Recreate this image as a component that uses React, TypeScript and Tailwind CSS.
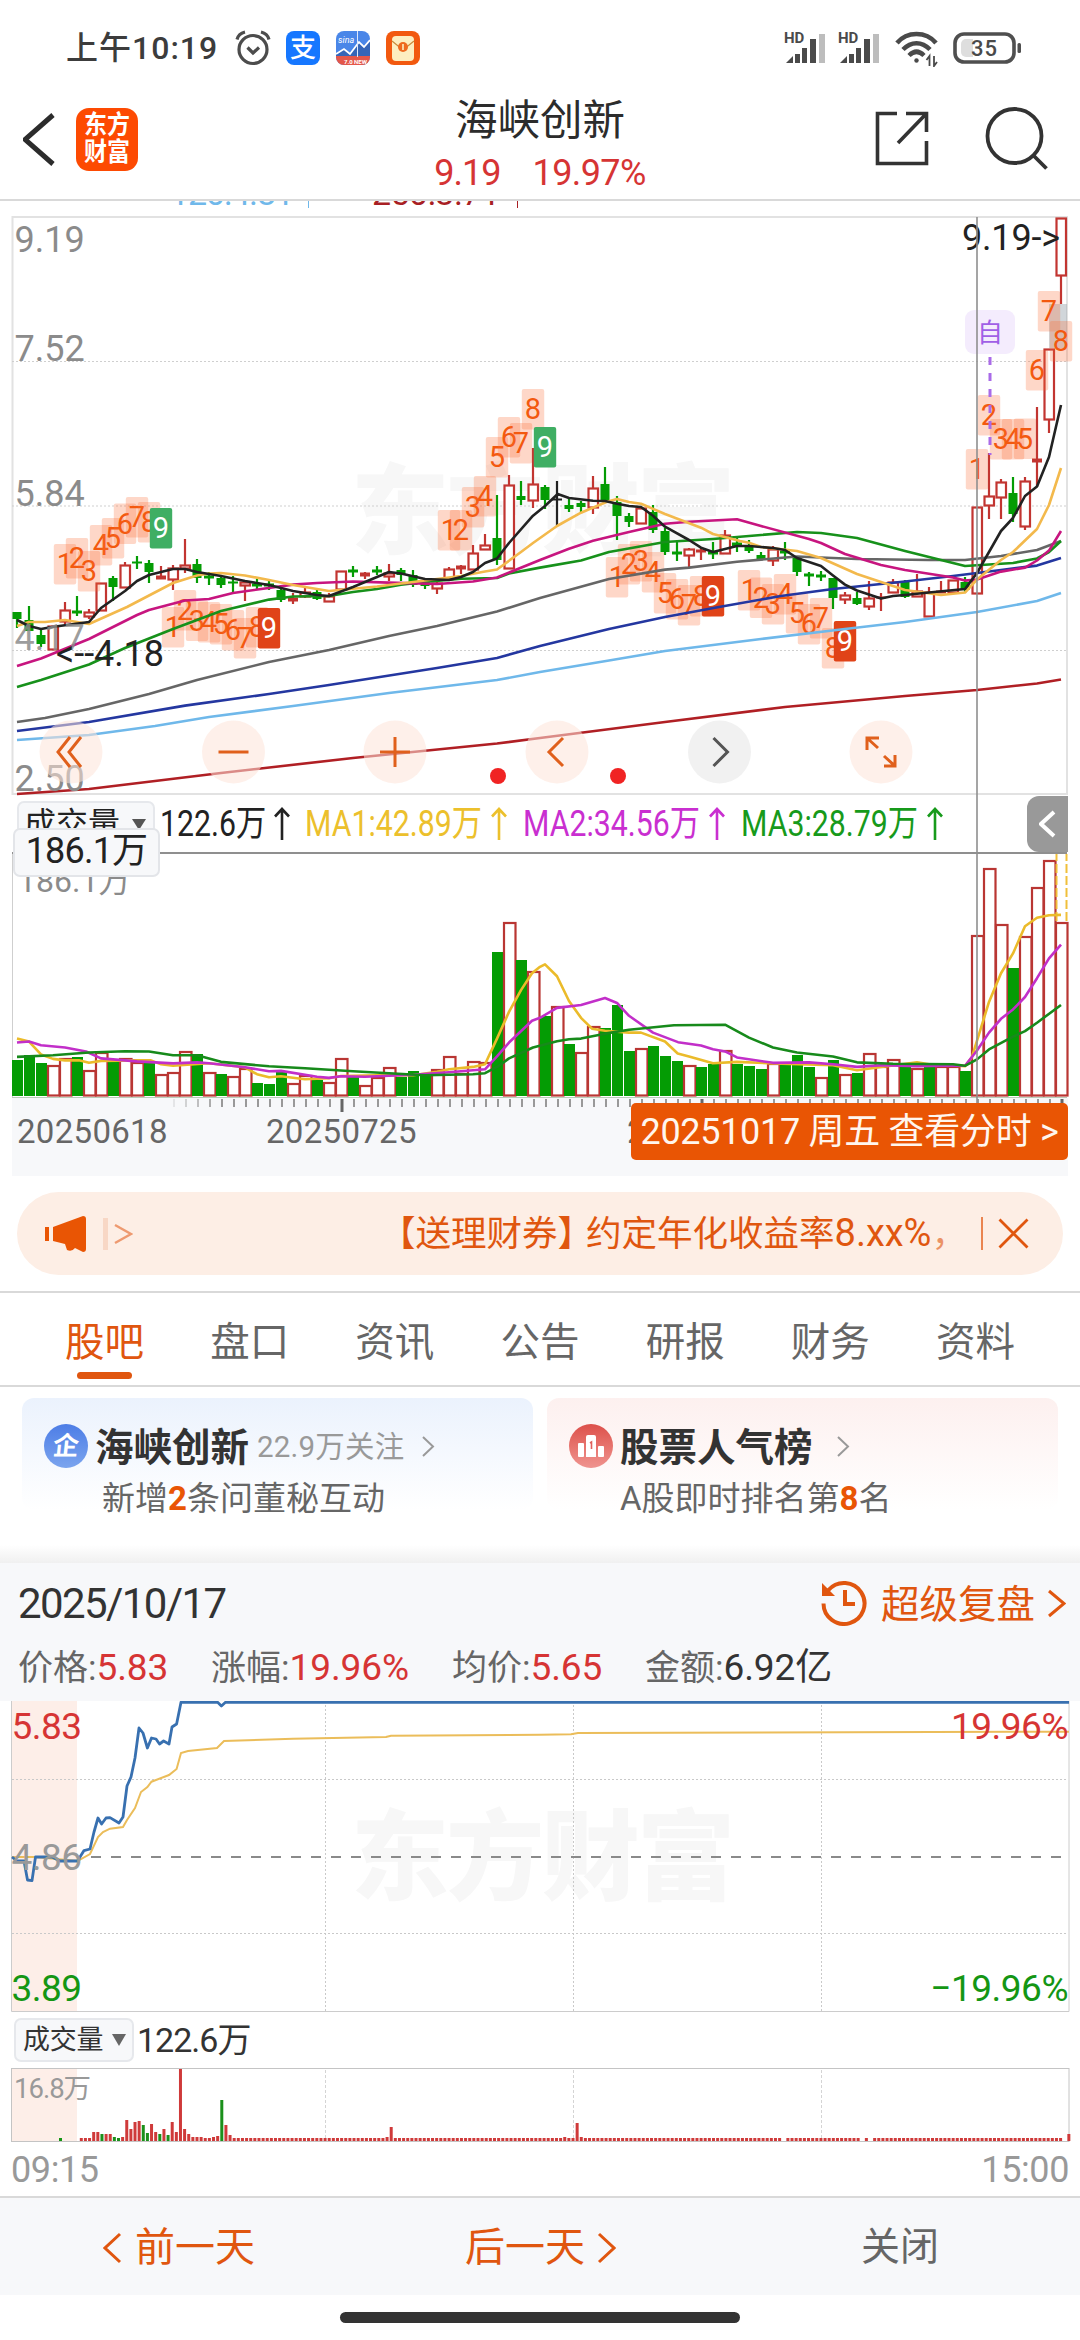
import type { ReactNode } from "react";

type Candle = [kind: "r" | "g" | "k", high: number, top: number, bottom: number, low: number];

const STEP = 12;
const cx = (i: number) => 17 + i * STEP;

const candles: Candle[] = [
  ["g", 612, 612, 619, 628], ["g", 606, 620, 631, 631], ["g", 630, 635, 644, 647], ["r", 626, 626, 650, 650],
  ["r", 602, 610, 622, 625], ["g", 596, 611, 613, 616], ["r", 609, 612, 617, 619], ["r", 583, 583, 611, 611],
  ["g", 576, 578, 587, 601], ["r", 562, 565, 588, 588], ["g", 556, 562, 563, 569], ["g", 560, 563, 572, 583],
  ["r", 566, 576, 579, 579], ["r", 565, 568, 580, 590], ["r", 539, 565, 569, 573], ["g", 559, 564, 578, 583],
  ["g", 572, 576, 578, 585], ["g", 576, 578, 585, 588], ["g", 576, 582, 583, 593], ["r", 580, 582, 586, 601],
  ["g", 579, 584, 586, 590], ["g", 581, 584, 586, 590], ["g", 587, 590, 600, 602], ["r", 593, 598, 601, 604],
  ["r", 587, 592, 597, 598], ["g", 590, 592, 599, 600], ["r", 593, 596, 602, 602], ["r", 571, 571, 590, 590],
  ["g", 566, 570, 572, 577], ["r", 572, 573, 576, 579], ["g", 566, 570, 572, 575], ["r", 564, 573, 577, 581],
  ["g", 568, 570, 575, 581], ["g", 570, 575, 585, 587], ["g", 579, 582, 586, 589], ["r", 582, 583, 589, 594],
  ["r", 567, 569, 579, 579], ["r", 565, 566, 569, 574], ["r", 545, 553, 570, 570], ["r", 534, 545, 550, 550],
  ["g", 495, 538, 560, 565], ["r", 475, 485, 569, 569], ["g", 481, 496, 500, 505], ["r", 448, 484, 501, 508],
  ["g", 485, 487, 500, 509], ["k", 481, 499, 500, 526], ["g", 499, 505, 509, 512], ["g", 501, 503, 507, 513],
  ["r", 476, 488, 508, 514], ["g", 467, 484, 501, 501], ["g", 496, 502, 516, 540], ["g", 513, 516, 522, 527],
  ["r", 508, 508, 524, 524], ["g", 505, 512, 530, 533], ["g", 528, 531, 552, 555], ["g", 541, 552, 554, 561],
  ["r", 548, 549, 556, 567], ["r", 548, 550, 552, 560], ["g", 542, 552, 554, 559], ["r", 530, 535, 554, 554],
  ["g", 536, 543, 546, 552], ["g", 540, 545, 551, 553], ["g", 552, 555, 560, 560], ["r", 546, 549, 561, 566],
  ["g", 542, 551, 553, 560], ["g", 556, 558, 572, 576], ["g", 572, 574, 576, 586], ["g", 571, 575, 577, 581],
  ["g", 578, 578, 598, 609], ["r", 592, 595, 600, 604], ["g", 592, 598, 604, 605], ["r", 581, 598, 607, 610],
  ["r", 593, 597, 598, 611], ["r", 579, 582, 593, 593], ["g", 580, 582, 597, 598], ["r", 574, 591, 597, 597],
  ["r", 587, 592, 617, 617], ["r", 581, 591, 593, 593], ["r", 580, 580, 593, 593], ["g", 577, 582, 590, 593],
  ["r", 507, 507, 594, 594], ["r", 453, 496, 506, 519], ["r", 479, 482, 498, 519], ["g", 477, 493, 514, 522],
  ["r", 477, 481, 527, 530], ["r", 407, 459, 462, 487], ["r", 349, 349, 420, 433], ["r", 218, 218, 276, 304],
];

const volumes = [
  36, 41, 33, 31, 38, 39, 26, 44, 35, 38, 34, 33, 22, 24, 45, 42, 24, 22, 20, 28, 13, 12, 25, 13, 21, 16, 14, 38, 19,
  11, 19, 29, 19, 25, 20, 27, 40, 23, 35, 34, 144, 174, 136, 125, 80, 90, 52, 44, 70, 68, 91, 45, 48, 50, 40, 35, 31,
  29, 32, 46, 32, 30, 27, 33, 31, 41, 29, 19, 36, 22, 23, 43, 30, 37, 30, 28, 29, 30, 30, 25, 161, 228, 172, 128, 160,
  209, 236, 174,
];
const volumeGreen = new Set([
  0, 1, 2, 5, 8, 11, 15, 17, 20, 21, 22, 25, 28, 32, 33, 34, 40, 42, 44, 46, 49, 50, 51, 53, 54, 55, 57, 58, 60, 61, 62,
  64, 65, 66, 68, 70, 74, 76, 79, 83,
]);

const priceLines = [
  { color: "#b01f24", points: "17,794 89,789 221,773 353,758 497,743.5 540,738 665,722 785,707 905,696 977,690 1037,683.5 1061,679.5" },
  { color: "#6fb8ea", points: "17,740 89,735 155,726 209,717 293,706 389,693 497,680 540,672 609,660.5 665,651 761,639 845,629 905,622 977,612 1037,601 1061,593" },
  { color: "#2437a0", points: "17,731 89,722 185,705.6 269,694 329,685 437,668 497,658 540,646 609,629 665,617 719,607 781,596 833,589 905,581.5 953,576 977,573 1001,570 1037,565.6 1061,558" },
  { color: "#666666", points: "17,722 45,718 89,709 149,694 197,680 269,662 329,650 389,636 437,626 497,611.5 540,598 609,579 665,569.6 689,567.6 737,561.7 797,556.5 857,559 929,560 965,560 1001,556 1037,550 1061,541" },
  { color: "#17911b", points: "17,687 41,680 89,664.5 125,648 173,629 221,611 269,599.6 293,596.5 329,596 353,592 377,589 401,584.6 425,582 461,578.7 497,578 509,573.5 540,567.6 581,560.5 609,552 665,542 713,539 761,535 797,532 821,533 857,538 905,551 953,563 965,566 1013,563 1037,558.5 1049,552 1061,541" },
  { color: "#c7157f", points: "17,666 41,658.5 89,639 137,615 149,610 185,600.5 209,599 233,593 293,584.6 317,583 353,581.5 389,582.6 437,584 473,581.5 497,577.5 540,560 569,548.7 593,540.7 629,532 665,523.7 689,521.7 737,519.3 761,526 809,539 821,543 845,554 881,565 905,570 953,577.5 965,580.6 977,579.5 1001,571.6 1025,567.6 1037,560.5 1049,550.6 1061,531" },
  { color: "#f3b94c", points: "17,626 29,622 45,622 65,620 89,624 127,607 173,583 197,575.5 209,573.5 221,573 245,575.5 269,580 293,585 329,591 377,586.5 425,580.5 461,576 485,571.5 497,569.5 521,552 533,543 557,526 581,512.7 607,501.7 617,499 629,502 641,503.7 665,514 701,527.7 713,534 740,541 749,542.7 761,547 797,551 821,558 857,574 905,590 941,595 965,592.5 977,579.5 1001,560 1013,552 1037,529 1049,505 1061,468" },
  { color: "#222222", points: "17,620 29,626 41,629 52,627 89,622 101,608 125,591 137,581 149,575 161,572 173,569 185,569 197,572 221,576 245,581 269,585 293,591 317,595 329,596 353,587 377,577 389,572 401,573.5 425,579 449,580 461,577 473,572 485,563 497,558.5 509,543 533,515.7 545,506 557.7,494 569,498 593,500.7 605,501 617,503.7 629,506 641,507 653,515.7 665,526.7 689,540 701,547.7 713,552 725,549 737,546 749,546 773,548 785,550 797,558 821,566 833,575.5 845,584.6 857,590.5 881,598.5 893,596 905,595 929,592.5 965,589 977,573 989,552 1001,531 1013,518 1025,496 1037,486.5 1049,457 1061,405" },
];

const volumeLines = [
  { color: "#ebbb2a", points: "17,1041 29,1044 41,1057 53,1061.5 65,1063 79,1063 89,1065.5 101,1063.5 137,1063 151,1063 161,1067 173,1068.5 209,1066 245,1070 257,1077 269,1080 281,1079 305,1082 329,1081 341,1078.7 377,1078 413,1078 437,1074.6 449,1072 473,1069.6 485,1067 497,1041 509,1014 521,992 532,975 540,968.5 545,966 557,978 569,1003 581,1020 592,1031 605,1033 629,1035 641,1035 665,1044 677.7,1056 689,1059 713,1066 737,1064.5 773,1066 833,1068 857,1073 881,1069.6 917,1065 929,1067 965,1069 972,1059.5 989,1004 1001,975 1013,955 1025,927.5 1037,919 1049,916.5 1061,916" },
  { color: "#c22fc9", points: "17,1045 29,1044 41,1047.7 65,1050 86,1054 101,1061 137,1064 173,1066 197,1065 209,1066 245,1070 269,1074 281,1073.6 317,1079.6 329,1080.7 341,1079 365,1079.6 413,1077.6 449,1075 485,1072 497,1059 509,1045 532,1023 540,1020 557,1010 581,1007 605,1000 617,1005 629,1018 653,1035 678,1044.6 701,1048 713,1051.7 725,1054 737,1060 773,1065.5 809,1065 833,1067 857,1069.6 881,1068 917,1069 941,1068.5 965,1068.5 977,1053 989,1035 1001,1021 1013,1011.6 1025,999 1037,980 1049,960 1061,946" },
  { color: "#178a1b", points: "17,1059.5 53,1057.8 89,1055 125,1053.7 149,1054 173,1057.8 197,1057.8 221,1064.5 269,1069 305,1071 353,1074 389,1076 425,1078 473,1077 485,1076 499,1068.5 509,1061 533,1050 557,1043.6 569,1041.6 581,1041 605,1036 629,1032 674,1027.5 725,1027 749,1040 773,1050 797,1055 833,1059 857,1065 893,1066.5 953,1067 965,1068.5 977,1062 989,1052 1013,1039 1025,1033.5 1037,1025 1061,1007" },
];

// TD sequence counts: index of the first candle, then the top of each tag
const sequences: { start: number; tops: number[]; nine?: string }[] = [
  { start: 4, tops: [544, 538, 551, 525, 518, 503.5, 497, 502, 508], nine: "#3fae63" },
  { start: 13, tops: [607, 590, 600.5, 602, 604, 610, 618, 607, 608], nine: "#e04318" },
  { start: 36, tops: [510, 510, 487, 476, 437, 417, 423, 389, 427], nine: "#3fae63" },
  { start: 50, tops: [557, 544, 541, 552, 573, 579, 585, 576, 576], nine: "#e04318" },
  { start: 61, tops: [570, 577.5, 584, 574, 593, 604, 598, 628, 621], nine: "#e04318" },
  { start: 80, tops: [449, 395, 419, 419, 418.5, 350, 291, 321] },
];

const minuteHeads = [
  3, 3, 3, 9, 9, 7, 7, 7, 4, 3, 4, 21, 12, 19, 20, 16, 8, 17, 9, 7, 12, 6, 19, 9, 72, 12, 7, 4, 4, 4, 3, 3, 4, 5, 41,
  16, 6,
];
const minuteSpikes: Record<number, number> = { 74: 4, 75: 14, 117: 4, 120: 18, 121: 4, 170: 0, 189: 0, 191: 0, 238: 0, 239: 7 };
const minuteGreen = new Set([5, 8, 9, 15, 16, 19, 21, 34]);
const minuteVolumes = Array.from({ length: 240 }, (_, i) => minuteHeads[i] ?? minuteSpikes[i] ?? 3);

const tabs = ["股吧", "盘口", "资讯", "公告", "研报", "财务", "资料"];

const indicators = [
  { text: "MA1:42.89万", color: "text-[#ecc02c]" },
  { text: "MA2:34.56万", color: "text-[#c92fd0]" },
  { text: "MA3:28.79万", color: "text-[#179a1b]" },
];

const stats = [
  { label: "价格", value: "5.83", color: "text-[#d63434]", width: "w-[193px]" },
  { label: "涨幅", value: "19.96%", color: "text-[#d63434]", width: "w-[241px]" },
  { label: "均价", value: "5.65", color: "text-[#d63434]", width: "w-[193px]" },
  { label: "金额", value: "6.92亿", color: "text-[#333]", width: "" },
];

function Chevron({ dir, w, h, stroke, className }: { dir: "left" | "right"; w: number; h: number; stroke: number; className: string }) {
  const d = dir === "left" ? `M${w - 2} 2L2 ${h / 2}L${w - 2} ${h - 2}` : `M2 2L${w - 2} ${h / 2}L2 ${h - 2}`;
  return (
    <svg width={w} height={h} fill="none" stroke="currentColor" strokeWidth={stroke} className={className}>
      <path d={d} />
    </svg>
  );
}

function UpArrow() {
  return (
    <svg width="16" height="34" viewBox="0 0 16 34" fill="none" stroke="currentColor" strokeWidth="2.6">
      <path d="M8 33V2M1 9.5L8 2l7 7.5" />
    </svg>
  );
}

function Signal() {
  return (
    <svg width="42" height="36" viewBox="0 0 42 36">
      <text x="0" y="13" fontSize="15" fontWeight="700" fill="#4a4a4a">HD</text>
      <path d="M2 33l7-7v7z" fill="#4a4a4a" />
      <rect x="11" y="24" width="5" height="9" fill="#4a4a4a" />
      <rect x="18" y="18" width="5" height="15" fill="#4a4a4a" />
      <rect x="26" y="9" width="6" height="24" fill="#4a4a4a" />
      <rect x="35" y="4" width="6" height="29" fill="#bdbdbd" />
    </svg>
  );
}

function StatusBar() {
  return (
    <div className="flex h-[94px] items-center pl-[66px] pr-[59px] pt-px">
      <span className="w-[153px] text-[32px] font-medium tracking-[1px] text-[#3c3c3c]">上午10:19</span>
      <svg className="ml-[16px]" width="36" height="36" viewBox="0 0 36 36" fill="none" stroke="#4c4c4c" strokeWidth="3.2">
        <circle cx="18" cy="19.5" r="14" />
        <path d="M12.5 17.5l5.500 5.500 6-5.500M2 9.500C3 5.500 6 3 10 2M34 9.500C33 5.500 30 3 26 2" />
      </svg>
      <span className="ml-[15px] flex size-[34px] items-center justify-center rounded-[8px] bg-[#1677ff] text-[26px] font-medium leading-none text-white">
        支
      </span>
      <svg className="ml-[16px]" width="34" height="34" viewBox="0 0 34 34">
        <clipPath id="app"><rect width="34" height="34" rx="8" /></clipPath>
        <g clipPath="url(#app)">
          <rect width="34" height="34" fill="#4a86e8" />
          <path d="M0 23l8-5 6 5 9-12 5 5 6-7v18H0z" fill="#3565b8" />
          <rect y="25" width="34" height="9" fill="#e4574a" />
          <path d="M0 23l8-5 6 5 9-12 5 5 6-7" fill="none" stroke="#fff" strokeWidth="1.8" />
          <path d="M21.5 0v26" stroke="#dfe8fa" />
          <text x="2" y="12" fontSize="9" fontStyle="italic" fill="#fff">sina</text>
          <text x="8" y="32.5" fontSize="6" fontWeight="700" fill="#fff">7.0 NEW</text>
        </g>
      </svg>
      <svg className="ml-[16px]" width="34" height="34" viewBox="0 0 34 34">
        <rect width="34" height="34" rx="8" fill="#f2590f" />
        <rect x="6" y="5" width="22" height="25" rx="4" fill="#fdeec0" />
        <path d="M6 10l11 9 11-9" fill="none" stroke="#c98a3a" strokeWidth="1.2" />
        <circle cx="17" cy="16" r="5" fill="#ee6a1f" />
        <path d="M17 13v6" stroke="#fdeec0" strokeWidth="1.6" />
      </svg>
      <div className="ml-auto flex items-center">
        <Signal />
        <span className="w-[12px]" />
        <Signal />
        <svg className="ml-[15px]" width="43" height="38" viewBox="0 0 43 38" fill="none" stroke="#4a4a4a" strokeWidth="4.5">
          <path d="M2 14C12 2 31 2 41 14M8 20.500c8-8.500 19-8.500 27 0M14 26.500c5-5 10-5 15 0" />
          <circle cx="21.5" cy="31.5" r="2.2" fill="#4a4a4a" stroke="none" />
          <path d="M34.5 37V27l-3 4M39 27v10l3-4" strokeWidth="1.8" />
        </svg>
        <svg className="ml-[15px]" width="68" height="32" viewBox="0 0 68 32">
          <rect x="2" y="2" width="59" height="28" rx="9" fill="none" stroke="#4f4f4f" strokeWidth="3.6" />
          <path d="M13 7h7v18h-7a5 5 0 0 1-5-5v-8a5 5 0 0 1 5-5z" fill="#dedede" />
          <rect x="64.5" y="11" width="3.5" height="10" rx="1.5" fill="#4f4f4f" />
          <text x="31.5" y="24" fontSize="22" fontWeight="500" textAnchor="middle" fill="#4a4a4a" letterSpacing="1">35</text>
        </svg>
      </div>
    </div>
  );
}

function NavBar() {
  return (
    <div className="grid h-[107px] grid-cols-[1fr_auto_1fr] items-center border-b-2 border-[#d9d9d9] pb-[6px]">
      <div className="flex items-center pb-[14px] pl-[23px]">
        <Chevron dir="left" w={32} h={53} stroke={5} className="text-[#2c2c2c]" />
        <div className="ml-[21px] flex h-[63px] w-[62px] flex-col items-center justify-center rounded-[13px] bg-[#fd4a02] text-[23px] font-bold leading-[27px] text-white">
          <span className="scale-y-[1.12]">东方</span>
          <span className="scale-y-[1.12]">财富</span>
        </div>
      </div>
      <div className="flex flex-col items-center">
        <h1 className="text-[42.5px] leading-[54px] text-[#2c2c2c]">海峡创新</h1>
        <div className="flex gap-[32px] text-[36px] leading-[50px] text-[#d63434]">
          <span className="tracking-[-1px]">9.19</span>
          <span className="tracking-[-0.6px]">19.97%</span>
        </div>
      </div>
      <div className="flex items-center justify-end gap-[56px] pb-[16px] pr-[31px] text-[#333]">
        <svg width="54" height="56" viewBox="0 0 54 56" fill="none" stroke="currentColor" strokeWidth="3.6">
          <path d="M22 3.500H2.500v50h49V31M31 3.500h20.500V22M51 4L23 33" />
        </svg>
        <svg width="64" height="64" viewBox="0 0 64 64" fill="none" stroke="currentColor" strokeWidth="3.8">
          <circle cx="29.5" cy="30" r="27" />
          <path d="M49 50l12.500 12.500" />
        </svg>
      </div>
    </div>
  );
}

function Tag({ x, y, n, fill }: { x: number; y: number; n: number; fill?: string }) {
  return (
    <g>
      <rect x={x - 11.2} y={y} width="22.4" height="40.5" rx="2" fill={fill ?? "#fb6d35"} fillOpacity={fill ? 1 : 0.27} />
      <text x={x} y={y + 30} fontSize="29" textAnchor="middle" fill={fill ? "#fff" : "#f3590f"}>{n}</text>
    </g>
  );
}

function RoundButton({ x, gray, children }: { x: number; gray?: boolean; children: ReactNode }) {
  return (
    <g transform={`translate(${x} 752)`} fill="none" stroke={gray ? "#555" : "#e0601c"} strokeWidth="3">
      <circle r="31.5" fill={gray ? "#e8e8e8" : "#fde4d8"} fillOpacity={gray ? 0.6 : 0.55} stroke="none" />
      {children}
    </g>
  );
}

function KLine() {
  return (
    <svg className="block h-[595px] w-[1080px]" viewBox="0 201 1080 595">
      <text x="170" y="205" fontSize="34" fill="#6fb8ea" textLength="124">120:4.81</text>
      <text x="372" y="205" fontSize="34" fill="#a81f24" textLength="128">250:3.71</text>
      <path d="M308.5 200v8" stroke="#6fb8ea" />
      <path d="M517.5 200v8" stroke="#a81f24" />
      <text x="351" y="546" fontSize="98" fontWeight="900" fill="#f7f7f7" textLength="384">东方财富</text>
      <rect x="12.5" y="217" width="1054.5" height="577" fill="none" stroke="#e2e2e2" strokeWidth="2" />
      <path d="M12 361.500H1067M12 506H1067M12 650.500H1067" stroke="#cfcfcf" strokeDasharray="2 2" />

      {candles.map(([kind, high, top, bottom, low], i) => {
        const color = kind === "r" ? "#c23531" : kind === "g" ? "#049c04" : "#222";
        const x = cx(i);
        const flat = bottom - top <= 3;
        return (
          <g key={i} stroke={color} strokeWidth="2.2">
            <path d={`M${x} ${high}V${top}M${x} ${bottom}V${low}`} />
            {kind === "r" && !flat ? (
              <rect x={x - 4.5} y={top + 0.5} width="9.5" height={bottom - top - 1} fill="#fff" />
            ) : (
              <rect x={x - 4.5} y={top} width="9" height={Math.max(bottom - top, 1)} fill={color} strokeWidth={flat ? 1 : 0} />
            )}
          </g>
        );
      })}

      <rect x="1049" y="304" width="18" height="44" fill="#9aa3ad" fillOpacity="0.45" />
      {sequences.map(({ start, tops, nine }) =>
        tops.map((y, j) => <Tag key={`${start}-${j}`} x={cx(start + j)} y={y} n={j + 1} fill={j === 8 ? nine : undefined} />),
      )}

      <g fill="none" strokeWidth="2.6" strokeLinejoin="round">
        {priceLines.map(({ color, points }) => (
          <polyline key={color} points={points} stroke={color} />
        ))}
      </g>

      <path d="M990 357V455" stroke="#a96be8" strokeWidth="3" strokeDasharray="8 8" />
      <rect x="965" y="310" width="50" height="44" rx="9" fill="#f4ecfd" />
      <text x="990" y="342" fontSize="26" textAnchor="middle" fill="#a05fe6">自</text>

      <g fontSize="36" fill="#8b8b8b">
        <text x="14.5" y="252">9.19</text>
        <text x="14.5" y="361">7.52</text>
        <text x="14.5" y="505.5">5.84</text>
        <text x="14.5" y="650" fillOpacity="0.85">4.17</text>
        <text x="14.5" y="791">2.50</text>
      </g>
      <text x="962" y="250" fontSize="36" fill="#222" textLength="98">9.19-&gt;</text>
      <text x="56" y="666" fontSize="36" fill="#222" textLength="108">&lt;--4.18</text>

      <RoundButton x={71}><path d="M-1-15L-13 0L-1 15M10-15L-2 0L10 15" /></RoundButton>
      <RoundButton x={233.5}><path d="M-15 0H15" /></RoundButton>
      <RoundButton x={395}><path d="M-15 0H15M0-15V15" /></RoundButton>
      <RoundButton x={557}><path d="M6-14L-8 0L6 14" /></RoundButton>
      <RoundButton x={719.5} gray><path d="M-6-14L8 0L-6 14" /></RoundButton>
      <RoundButton x={881}><path d="M-14-2V-14H-2M-14-14L-3-4M14 3V14H3M14 14L3 4" /></RoundButton>
      <circle cx="498" cy="776" r="8" fill="#f02323" />
      <circle cx="618" cy="776" r="8" fill="#f02323" />
    </svg>
  );
}

function IndicatorRow() {
  return (
    <div className="flex h-[56px] items-center whitespace-nowrap text-[36px] leading-none">
      <div className="ml-[17px] flex h-[46px] w-[138px] items-center gap-[12px] rounded-[7px] border-2 border-[#e6e8ec] bg-[#f7f8fa] pl-[5px] text-[32px] text-[#222]">
        成交量
        <svg width="14" height="11"><path d="M0 0h14L7 11z" fill="#555" /></svg>
      </div>
      <div className="ml-[5px] flex w-[145px] items-center text-[#222]">
        <span className="w-[114px]">
          <span className="inline-block origin-left scale-x-[0.84]">122.6万</span>
        </span>
        <UpArrow />
      </div>
      {indicators.map(({ text, color }) => (
        <div key={text} className={`flex w-[218px] items-center ${color}`}>
          <span className="w-[186px]">
            <span className="inline-block origin-left scale-x-[0.84]">{text}</span>
          </span>
          <UpArrow />
        </div>
      ))}
      <div className="ml-auto mr-[12px] flex h-[56px] w-[41px] items-center justify-center rounded-l-[12px] bg-[#999]">
        <Chevron dir="left" w={17} h={28} stroke={4} className="text-white" />
      </div>
    </div>
  );
}

function VolumeChart() {
  return (
    <svg className="block h-[246px] w-[1080px]" viewBox="0 852 1080 246">
      <path d="M12.5 853V1097" stroke="#cfcfcf" />
      <path d="M12 853H1067" stroke="#8f8f8f" strokeWidth="2" />
      <path d="M12 1097.500H1067" stroke="#b9cdb9" />
      <text x="18" y="891.5" fontSize="32" fill="#8b8b8b">186.1万</text>
      {volumes.map((h, i) =>
        volumeGreen.has(i) ? (
          <rect key={i} x={cx(i) - 5} y={1096 - h} width="11" height={h} fill="#049c04" />
        ) : (
          <rect key={i} x={cx(i) - 5} y={1097 - h} width="11.5" height={h - 1.5} fill="#fff" stroke="#b93633" strokeWidth="2.2" />
        ),
      )}
      <path d="M1056.500 921V854M1066.500 921V854" stroke="#f0bf3a" strokeWidth="2" strokeDasharray="9 3" />
      <g fill="none" strokeWidth="2.6" strokeLinejoin="round" transform="matrix(1 0 0 0.99 0 8)">
        {volumeLines.map(({ color, points }) => (
          <polyline key={color} points={points} stroke={color} />
        ))}
      </g>
    </svg>
  );
}

function DateAxis() {
  return (
    <div className="relative mx-[12px] h-[78px] bg-[#f7f8fa] text-[33px] leading-none tracking-[0.3px] text-[#666]">
      <svg className="block h-[16px] w-[1056px]" viewBox="12 1098 1056 16">
        {Array.from({ length: 75 }, (_, i) => (
          <path key={i} d={`M${174 + i * 12} 1099v8`} stroke="#999" strokeWidth="2" strokeOpacity={Math.min(1, 0.2 + i * 0.2)} />
        ))}
        <path d="M342 1099v13M702 1099v13M1062 1099v13" stroke="#666" strokeWidth="3" />
      </svg>
      <div className="flex pl-[5px] pt-[1px]">
        <span className="w-[249px]">20250618</span>
        <span className="w-[361px]">20250725</span>
        <span>20250911</span>
      </div>
      <div className="absolute right-0 top-[5px] flex h-[57px] w-[437px] items-center justify-center whitespace-pre rounded-[5px] bg-[#e95504] text-[36px] tracking-[-0.3px] text-[#fff6ee]">
        20251017 周五 查看分时 &gt;
      </div>
    </div>
  );
}

function DailyPanel() {
  return (
    <div className="relative">
      <KLine />
      <IndicatorRow />
      <VolumeChart />
      <DateAxis />
      {/* crosshair and its value */}
      <div className="absolute left-[976px] top-[16px] h-[886px] w-[2px] bg-[#8f8f8f]/80" />
      <div className="absolute left-[13px] top-[627px] flex h-[49px] w-[147px] items-center justify-center rounded-[7px] border-2 border-[#e3e5e9] bg-[#f7f8fa] pb-[3px] text-[36px] leading-none tracking-[-0.8px] text-[#222]">
        186.1万
      </div>
    </div>
  );
}

function Promo() {
  return (
    <div className="mx-[17px] mt-[16px] flex h-[83px] items-center rounded-full bg-[#fdeee5] text-[#e0560f]">
      <svg className="ml-[28px]" width="42" height="38" viewBox="0 0 42 38" fill="#e95504">
        <rect y="12" width="4" height="14" />
        <path d="M8 12L38 1q3 0 3 3v30q0 3-3 3l-8-4q-3 4-8 2l-2-6-12-3z" />
      </svg>
      <span className="ml-[16px] h-[32px] w-[5px] bg-[#e0560f]/15" />
      <Chevron dir="right" w={20} h={22} stroke={2.5} className="ml-[5px] text-[#ee9a70]" />
      <span className="ml-[247px] whitespace-nowrap pt-[3px] text-[35.5px]">
        【送理财券】<span className="-ml-[7px]">约定年化收益率</span>
        <span className="text-[38px] leading-none">8.xx%</span>
        <span className="inline-block w-[28px] overflow-hidden align-bottom opacity-60">，</span>
      </span>
      <span className="ml-auto h-[33px] w-[2px] bg-[#ea8450]" />
      <svg className="ml-[15px] mr-[34px]" width="31" height="31" viewBox="0 0 31 31" stroke="currentColor" strokeWidth="2.8">
        <path d="M1.5 1.500l28 28M29.500 1.500l-28 28" />
      </svg>
    </div>
  );
}

function Tabs() {
  return (
    <div className="mt-[16px] grid h-[96px] grid-cols-7 border-y-2 border-[#d9d9d9] px-[32px] text-[39.5px] leading-[60px] text-[#666]">
      {tabs.map((tab, i) => (
        <div key={tab} className={i === 0 ? "flex flex-col items-center pt-[20px] text-[#e0560f]" : "pt-[20px] text-center"}>
          {tab}
          {i === 0 && <span className="-mt-[1px] h-[7px] w-[55px] rounded-full bg-[#e0560f]" />}
        </div>
      ))}
    </div>
  );
}

function Cards() {
  return (
    <div className="mx-[22px] mt-[11px] grid h-[147px] grid-cols-2 gap-[14px]">
      <div className="h-[112px] rounded-[12px] bg-linear-to-b from-[#ebf2fd] to-white pl-[22px] pt-[22px]">
        <div className="flex h-[52px] items-center">
          <span className="flex size-[44px] items-center justify-center rounded-full bg-linear-to-b from-[#4d7de6] to-[#7ba4ee] text-[26px] font-bold text-white">
            <span className="-skew-x-6">企</span>
          </span>
          <span className="ml-[7px] pt-[4px] text-[38.5px] font-bold text-[#333]">海峡创新</span>
          <span className="ml-[8px] pt-[2px] text-[29.5px] tracking-[0.2px] text-[#999]">22.9万关注</span>
          <Chevron dir="right" w={14} h={23} stroke={2} className="ml-[17px] text-[#999]" />
        </div>
        <p className="pl-[58px] pt-[3px] text-[33px] leading-[48px] text-[#666]">
          新增<b className="text-[#e95504]">2</b>条问董秘互动
        </p>
      </div>
      <div className="h-[112px] rounded-[12px] bg-linear-to-b from-[#fdf0ef] to-white pl-[22px] pt-[22px]">
        <div className="flex h-[52px] items-center">
          <span className="flex size-[44px] items-center justify-center rounded-full bg-linear-to-b from-[#dc4f4a] to-[#ef938f]">
            <svg width="28" height="24" viewBox="0 0 28 24" fill="#fff">
              <rect x="1" y="9" width="6" height="14" rx="1" />
              <path d="M9 3q0-2 2-2h6q2 0 2 2v20H9z" />
              <rect x="21" y="12" width="6" height="11" rx="1" />
              <path d="M13 9l1.500-1v7" stroke="#e0625d" strokeWidth="1.6" fill="none" />
            </svg>
          </span>
          <span className="ml-[7px] pt-[4px] text-[38.5px] font-bold text-[#333]">股票人气榜</span>
          <Chevron dir="right" w={14} h={23} stroke={2} className="ml-[23px] text-[#999]" />
        </div>
        <p className="pl-[51px] pt-[3px] text-[33px] leading-[48px] text-[#666]">
          A股即时排名第<b className="text-[#e95504]">8</b>名
        </p>
      </div>
    </div>
  );
}

function IntradayHeader() {
  return (
    <div className="h-[138px] bg-[#f7f8fa] pl-[18px]">
      <div className="flex h-[80px] items-center pr-[14px]">
        <span className="text-[42px] tracking-[-1.6px] text-[#333]">2025/10/17</span>
        <div className="ml-auto flex items-center text-[#e0560f]">
          <svg width="46" height="46" viewBox="0 0 46 46" fill="none" stroke="currentColor" strokeWidth="4">
            <path d="M2.5 23.500a20.500 20.500 0 1 0 5-13.500L4 14" />
            <path d="M1 3v13h13z" fill="currentColor" stroke="none" />
            <path d="M24 10v14h10" />
          </svg>
          <span className="ml-[14px] pt-[3px] text-[38.5px]">超级复盘</span>
          <Chevron dir="right" w={19} h={29} stroke={3} className="ml-[12px]" />
        </div>
      </div>
      <div className="flex h-[48px] items-center text-[35px] leading-none">
        {stats.map(({ label, value, color, width }) => (
          <span key={label} className={`whitespace-nowrap text-[#666] ${width}`}>
            {label}:<span className={`text-[37px] tracking-[-0.1px] ${color}`}>{value}</span>
          </span>
        ))}
      </div>
    </div>
  );
}

function Intraday() {
  return (
    <svg className="block h-[311px] w-[1080px]" viewBox="0 1701 1080 311">
      <rect x="12" y="1701" width="65" height="310" fill="#fdeee8" />
      <text x="351" y="1892" fontSize="98" fontWeight="900" fill="#f7f7f7" textLength="384">东方财富</text>
      <path d="M12 1779.500H1068M12 1933.500H1068M325.500 1705V2011M573.500 1705V2011M821.500 1705V2011" stroke="#c9c9c9" strokeDasharray="2 2" />
      <path d="M11.5 1701V2011.500H1069V1701" fill="none" stroke="#ccc" />
      <path d="M91 1857H1062" stroke="#8a8a8a" strokeWidth="2" strokeDasharray="10 10" />
      <polyline
        fill="none"
        stroke="#ebbd5a"
        strokeWidth="2"
        points="12,1857 35.5,1857 77.5,1861 90,1854 98,1837 103,1832 110,1828.7 123,1827 127,1820 135,1808 141,1792 147.4,1787 151.5,1781.7 169,1775 176.6,1769 181,1753 188,1751 217,1748 224,1741 293,1738.7 386,1737 391,1735.7 540,1734.7 571,1734.3 578,1733 1069,1731.7"
      />
      <polyline
        fill="none"
        stroke="#3870b0"
        strokeWidth="2.8"
        strokeLinejoin="round"
        points="12,1857 17,1861 24,1861 27.5,1880 32,1880.6 35.5,1857 52,1857 60,1861 77.5,1861 84,1850.6 90,1849 94,1832 98,1818 101.6,1824 106,1818 110,1817.6 119,1823 123,1817 127,1786 131,1777 135,1758 139,1728 143,1733 147.4,1748 151.5,1738 156,1739 159.5,1744 163.6,1741 169,1744 172,1727 176.6,1724 181,1702.3 217.6,1702.3 221.4,1706 225.5,1702.3 1069,1702.3"
      />
      <g fontSize="37" letterSpacing="-0.5">
        <text x="11.5" y="1739" fill="#d63434">5.83</text>
        <text x="11.5" y="1870" fill="#999">4.86</text>
        <text x="11.5" y="2001" fill="#149614">3.89</text>
        <text x="1068" y="1739" fill="#d63434" textAnchor="end">19.96%</text>
        <text x="1068" y="2001" fill="#149614" textAnchor="end">−19.96%</text>
      </g>
    </svg>
  );
}

function IntradayVolume() {
  return (
    <>
      <div className="flex h-[56px] items-center text-[34px] tracking-[-1px] text-[#333]">
        <div className="ml-[14px] mr-[3px] flex h-[44px] w-[120px] items-center gap-[9px] rounded-[7px] border-2 border-[#e6e8ec] bg-[#f7f8fa] pl-[7px] text-[27px] tracking-[-0.3px]">
          成交量
          <svg width="14" height="12"><path d="M0 0h14L7 12z" fill="#666" /></svg>
        </div>
        122.6万
      </div>
      <svg className="block h-[74px] w-[1080px]" viewBox="0 2068 1080 74">
        <rect x="12" y="2068" width="65" height="73" fill="#fdeee8" />
        <path d="M325.5 2070V2141M573.500 2070V2141M821.500 2070V2141" stroke="#d4d4d4" strokeDasharray="3 2" />
        <rect x="11.5" y="2068.5" width="1057.5" height="73" fill="none" stroke="#c4c4c4" />
        <rect x="59" y="2138" width="3" height="3" fill="#149614" />
        {minuteVolumes.map((h, i) => (
          <rect key={i} x={79.8 + i * 4.132} y={2141 - h} width="3" height={h} fill={minuteGreen.has(i) ? "#1b901b" : "#cf3a3a"} />
        ))}
        <text x="14" y="2098" fontSize="27.5" fill="#999" letterSpacing="-1">16.8万</text>
      </svg>
      <div className="flex h-[54px] justify-between px-[11px] pt-[6px] text-[36px] leading-[44px] tracking-[-0.4px] text-[#999]">
        <span>09:15</span>
        <span>15:00</span>
      </div>
    </>
  );
}

function BottomBar() {
  return (
    <div className="flex h-[99px] items-center border-t-2 border-[#d9d9d9] bg-[#f7f8fa] pt-[2px] text-[40px] text-[#e0560f]">
      <div className="flex w-[360px] items-center pl-[103px]">
        <Chevron dir="left" w={19} h={32} stroke={3} className="mr-[13px]" />
        前一天
      </div>
      <div className="flex w-[360px] items-center pl-[105px]">
        后一天
        <Chevron dir="right" w={19} h={32} stroke={3} className="ml-[12px]" />
      </div>
      <div className="w-[360px] text-center text-[39px] text-[#666]">关闭</div>
    </div>
  );
}

export default function App() {
  return (
    <div className="flex h-[2340px] w-[1080px] flex-col overflow-hidden bg-white [font-family:Roboto,'Noto_Sans_CJK_SC',sans-serif]">
      <StatusBar />
      <NavBar />
      <DailyPanel />
      <Promo />
      <Tabs />
      <Cards />
      <div className="h-[18px] bg-linear-to-b from-white to-[#f0f0f0]" />
      <IntradayHeader />
      <Intraday />
      <IntradayVolume />
      <BottomBar />
      <div className="mx-auto mt-[17px] h-[11px] w-[400px] rounded-full bg-[#333]" />
    </div>
  );
}
